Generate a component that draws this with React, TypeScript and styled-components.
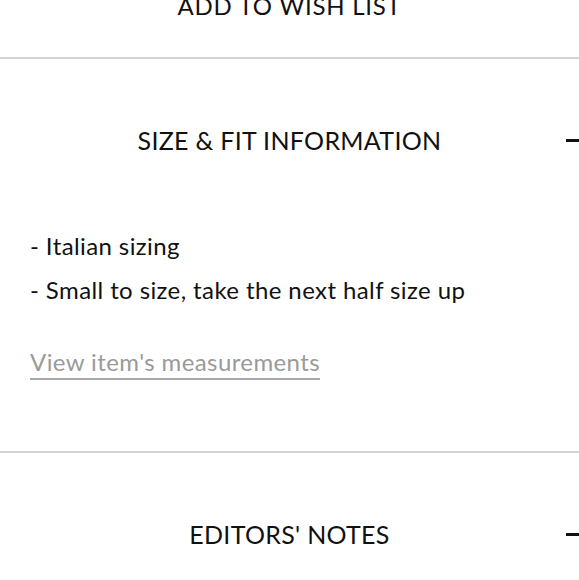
import React from "react";
import styled, { createGlobalStyle } from "styled-components";

const GlobalStyle = createGlobalStyle`
  html, body {
    margin: 0;
    padding: 0;
    background: #ffffff;
    overflow: hidden;
  }
  body {
    font-family: Lato, "Noto Sans", "DejaVu Sans", sans-serif;
    color: #111111;
  }
`;

const Page = styled.div`
  width: 579px;
  display: flex;
  flex-direction: column;
`;

const WishArea = styled.div`
  display: flex;
  justify-content: center;
  padding-bottom: 45px;
  border-bottom: 2px solid #d4d4d4;
`;

const WishButton = styled.button`
  border: none;
  background: none;
  padding: 0;
  margin: 0;
  font-family: Lato, "Noto Sans", sans-serif;
  font-size: 24px;
  line-height: 12px;
  height: 12px;
  letter-spacing: 0.75px;
  color: #111111;
  cursor: pointer;
`;

const Section = styled.section<{ $last?: boolean }>`
  display: flex;
  flex-direction: column;
  border-bottom: ${(p) => (p.$last ? "none" : "2px solid #d4d4d4")};
`;

const Header = styled.div`
  position: relative;
  display: flex;
  justify-content: center;
  align-items: center;
  padding-top: 67px;
`;

const Title = styled.h2`
  margin: 0;
  font-family: Lato, "Noto Sans", sans-serif;
  font-weight: 400;
  font-size: 25px;
  line-height: 29px;
  letter-spacing: 0.3px;
  color: #111111;
`;

const MinusIcon = styled.span`
  position: absolute;
  right: -8px;
  top: 80px;
  width: 21px;
  height: 3px;
  background: #111111;
`;

const Body = styled.div`
  display: flex;
  flex-direction: column;
  align-items: flex-start;
  padding: 69px 30px 71px;
`;

const List = styled.ul`
  list-style: none;
  margin: 0;
  padding: 0;
`;

const Item = styled.li`
  font-size: 24px;
  line-height: 44px;
  letter-spacing: 0.4px;
  color: #111111;
`;

const MeasureLink = styled.a`
  display: inline-block;
  margin-top: 36px;
  font-size: 24px;
  line-height: 28px;
  letter-spacing: 0.4px;
  padding-bottom: 2px;
  color: #9a9a9a;
  text-decoration: none;
  border-bottom: 2px solid #a8a8a8;
`;

export default function App() {
  return (
    <Page>
      <GlobalStyle />
      <WishArea>
        <WishButton>ADD TO WISH LIST</WishButton>
      </WishArea>
      <Section>
        <Header>
          <Title>SIZE &amp; FIT INFORMATION</Title>
          <MinusIcon />
        </Header>
        <Body>
          <List>
            <Item>- Italian sizing</Item>
            <Item>- Small to size, take the next half size up</Item>
          </List>
          <MeasureLink href="#">View item's measurements</MeasureLink>
        </Body>
      </Section>
      <Section $last>
        <Header>
          <Title>EDITORS' NOTES</Title>
          <MinusIcon />
        </Header>
      </Section>
    </Page>
  );
}
